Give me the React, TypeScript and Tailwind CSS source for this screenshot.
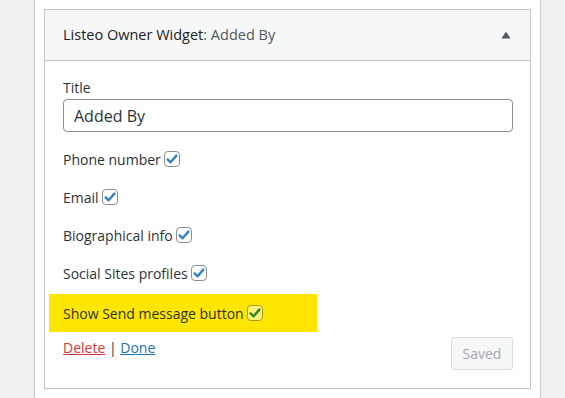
import React from 'react';

const font = { fontFamily: '"Open Sans", "Noto Sans", sans-serif' };

function Check({ highlighted = false }: { highlighted?: boolean }) {
  return (
    <span
      className={`inline-flex h-[16px] w-[16px] shrink-0 items-center justify-center rounded-[4px] border ${
        highlighted ? 'border-[#a39d2e] bg-[#fff27a]' : 'border-[#8c8f94] bg-white'
      }`}
    >
      <svg width="14" height="14" viewBox="0 0 14 14">
        <path
          d="M2.6 7.4 L5.6 10.3 L11.4 3.6"
          fill="none"
          stroke={highlighted ? '#2f8a1e' : '#3582c4'}
          strokeWidth="2.4"
          strokeLinecap="round"
          strokeLinejoin="round"
        />
      </svg>
    </span>
  );
}

function CheckRow({ label, highlighted = false }: { label: string; highlighted?: boolean }) {
  return (
    <label className="flex h-[20px] items-center gap-[3px] text-[14px] text-[#2c3338]">
      <span>{label}</span>
      <Check highlighted={highlighted} />
    </label>
  );
}

export default function App() {
  return (
    <div className="flex h-[398px] w-[565px] overflow-hidden bg-[#f0f0f1]" style={font}>
      <div className="ml-[34px] flex h-full w-[507px] flex-col border-x border-[#c3c4c7] bg-white px-[9px] pt-[9px]">
        <div className="flex h-[380px] flex-col border border-[#c3c4c7] bg-white">
          {/* header */}
          <div className="flex h-[51px] items-center justify-between border-b border-[#c3c4c7] bg-[#f6f7f7] pl-[18px] pr-[19px]">
            <h3 className="text-[14.5px] font-medium text-[#1d2327]">
              Listeo Owner Widget<span className="font-normal text-[#50575e]">: Added By</span>
            </h3>
            <svg width="10" height="8" viewBox="0 0 10 8">
              <path d="M5 0.5 L9.5 7.5 L0.5 7.5 Z" fill="#50575e" />
            </svg>
          </div>

          {/* body */}
          <div className="flex flex-1 flex-col pl-[18px] pr-[17px] pt-[17px]">
            <label className="h-[20px] text-[14px] leading-[20px] text-[#2c3338]">Title</label>
            <input
              readOnly
              value="Added By"
              className="mt-[1px] h-[33px] w-[450px] rounded-[4px] border border-[#8c8f94] px-[10px] text-[16px] text-[#2c3338] outline-none"
              style={font}
            />

            <div className="mt-[17px] flex flex-col gap-[18px]">
              <CheckRow label="Phone number" />
              <CheckRow label="Email" />
              <CheckRow label="Biographical info" />
              <CheckRow label="Social Sites profiles" />
            </div>

            <div className="-ml-[14px] mt-[11px] flex h-[38px] w-[268px] items-center bg-[#ffe600] pl-[14px]">
              <CheckRow label="Show Send message button" highlighted />
            </div>

            <div className="mt-[5px] flex items-start justify-between">
              <div className="mt-[1px] text-[14px] leading-[20px] text-[#2c3338]">
                <a className="text-[#d63638] underline">Delete</a>
                <span> | </span>
                <a className="text-[#2271b1] underline">Done</a>
              </div>
              <button
                disabled
                className="h-[33px] w-[62px] rounded-[3px] border border-[#dcdcde] bg-[#f6f7f7] text-[14px] text-[#a7aaad]"
                style={font}
              >
                Saved
              </button>
            </div>
          </div>
        </div>
      </div>
    </div>
  );
}
